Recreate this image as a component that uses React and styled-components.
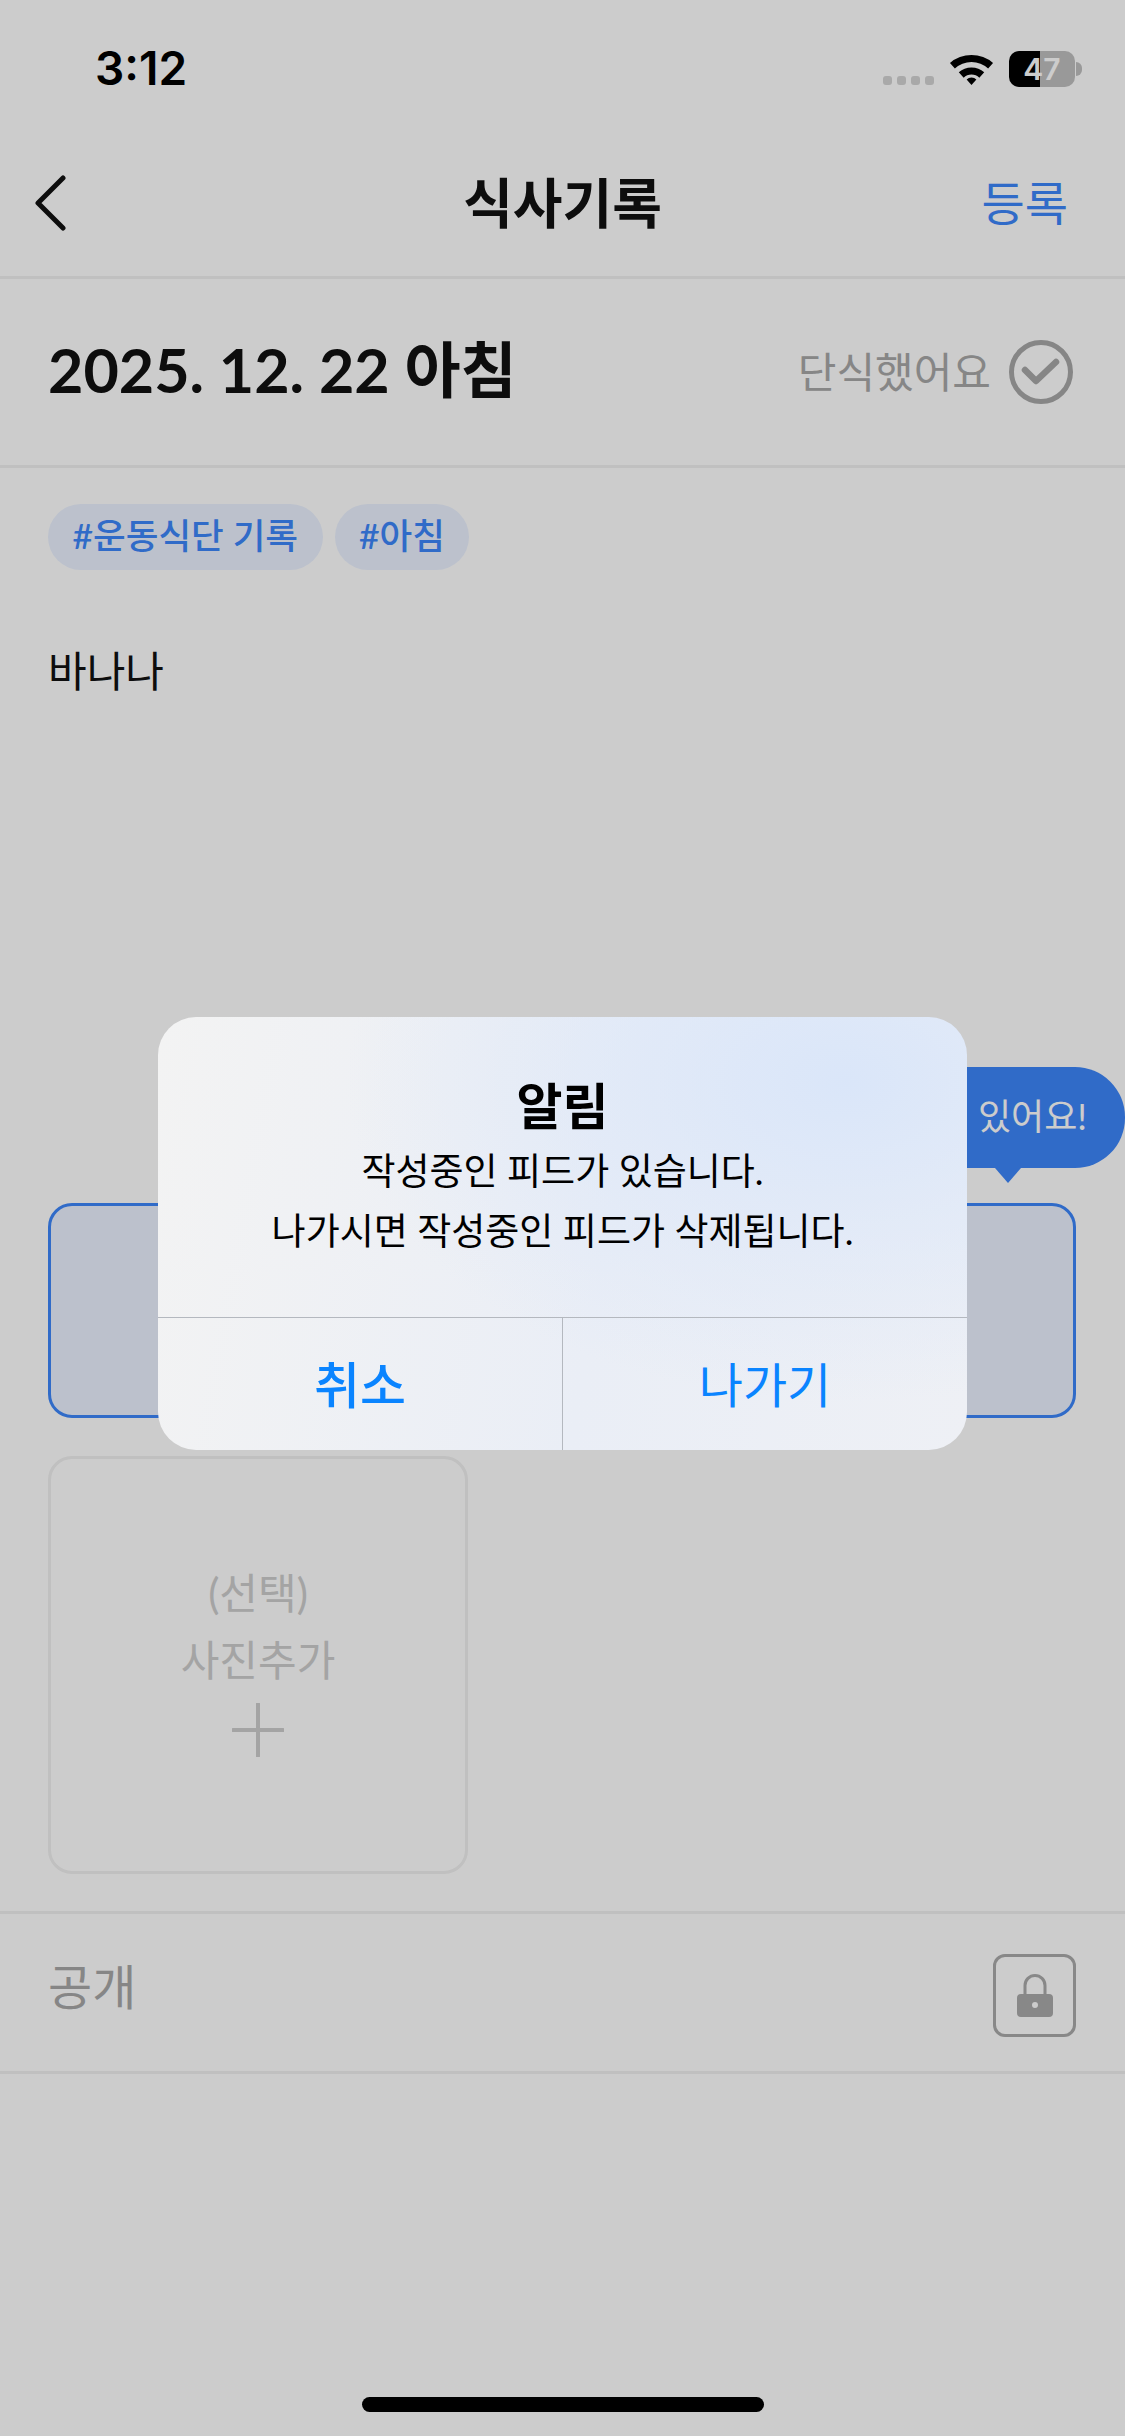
import React from 'react'
import styled, { createGlobalStyle } from 'styled-components'

const GlobalStyle = createGlobalStyle`
  html, body {
    margin: 0;
    padding: 0;
    background: #fff;
  }
  * {
    box-sizing: border-box;
  }
  body {
    font-family: "Lato", "Noto Sans CJK KR", sans-serif;
  }
`

const Page = styled.div`
  position: relative;
  width: 1125px;
  height: 2436px;
  background: #fff;
  overflow: hidden;
  display: flex;
  flex-direction: column;
`

const StatusBar = styled.div`
  height: 112px;
  padding: 40px 50px 0 95px;
  display: flex;
  justify-content: space-between;
  align-items: flex-start;
`

const Time = styled.div`
  font-family: "Inter", sans-serif;
  font-size: 46px;
  line-height: 56px;
  font-weight: 600;
  color: #000;
`

const StatusIcons = styled.div`
  display: flex;
  align-items: flex-start;
  gap: 15px;
  padding-top: 11px;
`

const SignalDots = styled.div`
  display: flex;
  gap: 5px;
  margin-top: 25px;
`

const SignalDot = styled.span`
  width: 9px;
  height: 9px;
  border-radius: 3px;
  background: #d4d4d4;
`

const WifiIcon = styled.svg`
  margin-top: 1px;
`

const Battery = styled.div`
  position: relative;
  width: 66px;
  height: 36px;
  border-radius: 10px;
  background: linear-gradient(90deg, #000 47%, #c0c0c0 47%);
  color: #fff;
  font-family: "Inter", sans-serif;
  font-size: 30px;
  font-weight: 600;
  line-height: 36px;
  text-align: center;

  &::after {
    content: '';
    position: absolute;
    right: -7px;
    top: 11px;
    width: 6px;
    height: 14px;
    border-radius: 0 6px 6px 0;
    background: #c0c0c0;
  }
`

const NavBar = styled.div`
  height: 167px;
  padding: 13px 57px 0;
  display: grid;
  grid-template-columns: 1fr auto 1fr;
  align-items: center;
  border-bottom: 3px solid #f0f0f0;
`

const BackIcon = styled.svg`
  margin: 4px 0 0 -23px;
`

const NavTitle = styled.h1`
  margin: 0;
  font-size: 54px;
  font-weight: 700;
  color: #111;
`

const NavAction = styled.div`
  justify-self: end;
  font-size: 47px;
  color: #3d86fa;
`

const DateRow = styled.div`
  height: 189px;
  padding: 0 52px 0 48px;
  display: flex;
  align-items: center;
  justify-content: space-between;
  border-bottom: 3px solid #f0f0f0;
`

const DateText = styled.div`
  padding-bottom: 12px;
  font-size: 61px;
  font-weight: 700;
  color: #111;
`

const FastToggle = styled.div`
  display: flex;
  align-items: center;
  gap: 18px;
  font-size: 42px;
  color: #a8a8a8;
`

const ToggleLabel = styled.span`
  padding-bottom: 5px;
`

const Content = styled.div`
  padding: 36px 49px 0 48px;
  display: flex;
  flex-direction: column;
`

const Tags = styled.div`
  display: flex;
  gap: 12px;
`

const Tag = styled.span`
  height: 66px;
  padding: 0 24.5px;
  border-radius: 33px;
  background: #ebf2ff;
  color: #3d86fa;
  font-size: 35.5px;
  font-weight: 500;
  line-height: 64px;
`

const Memo = styled.div`
  margin-top: 66px;
  height: 567px;
  font-size: 42px;
  line-height: 70px;
  color: #111;
`

const GuideBox = styled.div`
  position: relative;
  height: 215px;
  border: 3px solid #3d86fa;
  border-radius: 24px;
  background: #ebf2ff;
`

const Bubble = styled.div`
  position: absolute;
  right: -52px;
  top: -139px;
  height: 101px;
  padding: 0 38px 0 60px;
  border-radius: 50px;
  background: #3d86fa;
  color: #fff;
  font-size: 36px;
  line-height: 99px;
  white-space: nowrap;

  &::after {
    content: '';
    position: absolute;
    right: 104px;
    bottom: -15px;
    border-left: 13px solid transparent;
    border-right: 13px solid transparent;
    border-top: 15px solid #3d86fa;
  }
`

const PhotoCard = styled.div`
  margin-top: 38px;
  width: 420px;
  height: 418px;
  border: 3px solid #f0f0f0;
  border-radius: 24px;
  display: flex;
  flex-direction: column;
  align-items: center;
  padding-top: 101px;
  color: #cdcdcd;
  font-size: 42px;
  line-height: 67px;

  svg {
    margin-top: 9px;
  }
`

const PublicRow = styled.div`
  margin-top: 37px;
  height: 163px;
  padding: 5px 49px 0 48px;
  display: flex;
  align-items: center;
  justify-content: space-between;
  border-top: 3px solid #f0f0f0;
  border-bottom: 3px solid #f0f0f0;
`

const PublicLabel = styled.span`
  padding-bottom: 22px;
  color: #a8a8a8;
  font-size: 48px;
`

const LockBox = styled.div`
  width: 83px;
  height: 83px;
  border: 3px solid #aaaaaa;
  border-radius: 12px;
  display: flex;
  align-items: center;
  justify-content: center;
`

const HomeBar = styled.div`
  position: absolute;
  left: 362px;
  bottom: 24px;
  width: 402px;
  height: 15px;
  border-radius: 8px;
  background: #000;
`

const Overlay = styled.div`
  position: absolute;
  inset: 0;
  background: rgba(0, 0, 0, 0.2);
  display: flex;
  justify-content: center;
  padding-top: 1017px;
`

const Dialog = styled.div`
  width: 809px;
  height: 433px;
  border-radius: 38px;
  overflow: hidden;
  display: flex;
  flex-direction: column;
  background:
    radial-gradient(ellipse 500px 320px at 85% 15%, #dae6f9 0%, rgba(220, 231, 249, 0) 100%),
    linear-gradient(100deg, #f3f3f3 0%, #eaeef6 55%, #eef0f5 100%);
`

const DialogBody = styled.div`
  height: 301px;
  padding-top: 54px;
  display: flex;
  flex-direction: column;
  align-items: center;
  border-bottom: 1px solid #b4b8bf;
  color: #000;
`

const DialogTitle = styled.div`
  font-size: 50px;
  line-height: 70px;
  font-weight: 700;
`

const DialogLine = styled.div`
  font-size: 37px;
  line-height: 60px;
`

const DialogActions = styled.div`
  flex: 1;
  display: flex;
`

const DialogButton = styled.div`
  flex: 1;
  padding-bottom: 5px;
  display: flex;
  align-items: center;
  justify-content: center;
  color: #0a84ff;
  font-size: ${props => (props.$primary ? 50 : 48)}px;
  font-weight: ${props => (props.$primary ? 500 : 400)};
  & + & {
    border-left: 1px solid #b4b8bf;
  }
`

const App = () => {
  return (
    <>
      <GlobalStyle />
      <Page>
        <StatusBar>
          <Time>3:12</Time>
          <StatusIcons>
            <SignalDots>
              <SignalDot /><SignalDot /><SignalDot /><SignalDot />
            </SignalDots>
            <WifiIcon width="45" height="33" viewBox="0 0 46 36" preserveAspectRatio="none">
              <path d="M1 12 A32 32 0 0 1 45 12 L40 18 A24 24 0 0 0 6 18 Z" fill="#000" />
              <path d="M10 22 A19 19 0 0 1 36 22 L31 28 A11 11 0 0 0 15 28 Z" fill="#000" />
              <path d="M18 30 A7 7 0 0 1 28 30 L23 36 Z" fill="#000" />
            </WifiIcon>
            <Battery>47</Battery>
          </StatusIcons>
        </StatusBar>
        <NavBar>
          <BackIcon width="32" height="56" viewBox="0 0 32 56">
            <path d="M29 3 L4 28 L29 53" fill="none" stroke="#111" strokeWidth="5" strokeLinecap="round" strokeLinejoin="round" />
          </BackIcon>
          <NavTitle>식사기록</NavTitle>
          <NavAction>등록</NavAction>
        </NavBar>
        <DateRow>
          <DateText>2025. 12. 22 아침</DateText>
          <FastToggle>
            <ToggleLabel>단식했어요</ToggleLabel>
            <svg width="64" height="64" viewBox="0 0 64 64">
              <circle cx="32" cy="32" r="29.5" fill="none" stroke="#a8a8a8" strokeWidth="5" />
              <path d="M16 30 L27 41 L47 22" fill="none" stroke="#a8a8a8" strokeWidth="6.5" strokeLinecap="round" strokeLinejoin="round" />
            </svg>
          </FastToggle>
        </DateRow>
        <Content>
          <Tags>
            <Tag>#운동식단 기록</Tag>
            <Tag>#아침</Tag>
          </Tags>
          <Memo>바나나</Memo>
          <GuideBox>
            <Bubble>있어요!</Bubble>
          </GuideBox>
          <PhotoCard>
            <div>(선택)</div>
            <div>사진추가</div>
            <svg width="52" height="54" viewBox="0 0 52 54">
              <path d="M26 1 V53 M1 27 H51" stroke="#cdcdcd" strokeWidth="4" strokeLinecap="round" />
            </svg>
          </PhotoCard>
        </Content>
        <PublicRow>
          <PublicLabel>공개</PublicLabel>
          <LockBox>
            <svg width="36" height="43" viewBox="0 0 36 43">
              <path d="M8 21 V11.5 A10 10 0 0 1 28 11.5 V21" fill="none" stroke="#aaaaaa" strokeWidth="3" />
              <path fillRule="evenodd" d="M4 20 H32 A4 4 0 0 1 36 24 V39 A4 4 0 0 1 32 43 H4 A4 4 0 0 1 0 39 V24 A4 4 0 0 1 4 20 Z M18 28 A3 3 0 1 0 18 34 A3 3 0 1 0 18 28 Z" fill="#aaaaaa" />
            </svg>
          </LockBox>
        </PublicRow>
        <HomeBar />
        <Overlay>
          <Dialog>
            <DialogBody>
              <DialogTitle>알림</DialogTitle>
              <DialogLine>작성중인 피드가 있습니다.</DialogLine>
              <DialogLine>나가시면 작성중인 피드가 삭제됩니다.</DialogLine>
            </DialogBody>
            <DialogActions>
              <DialogButton $primary>취소</DialogButton>
              <DialogButton>나가기</DialogButton>
            </DialogActions>
          </Dialog>
        </Overlay>
      </Page>
    </>
  )
}

export default App
